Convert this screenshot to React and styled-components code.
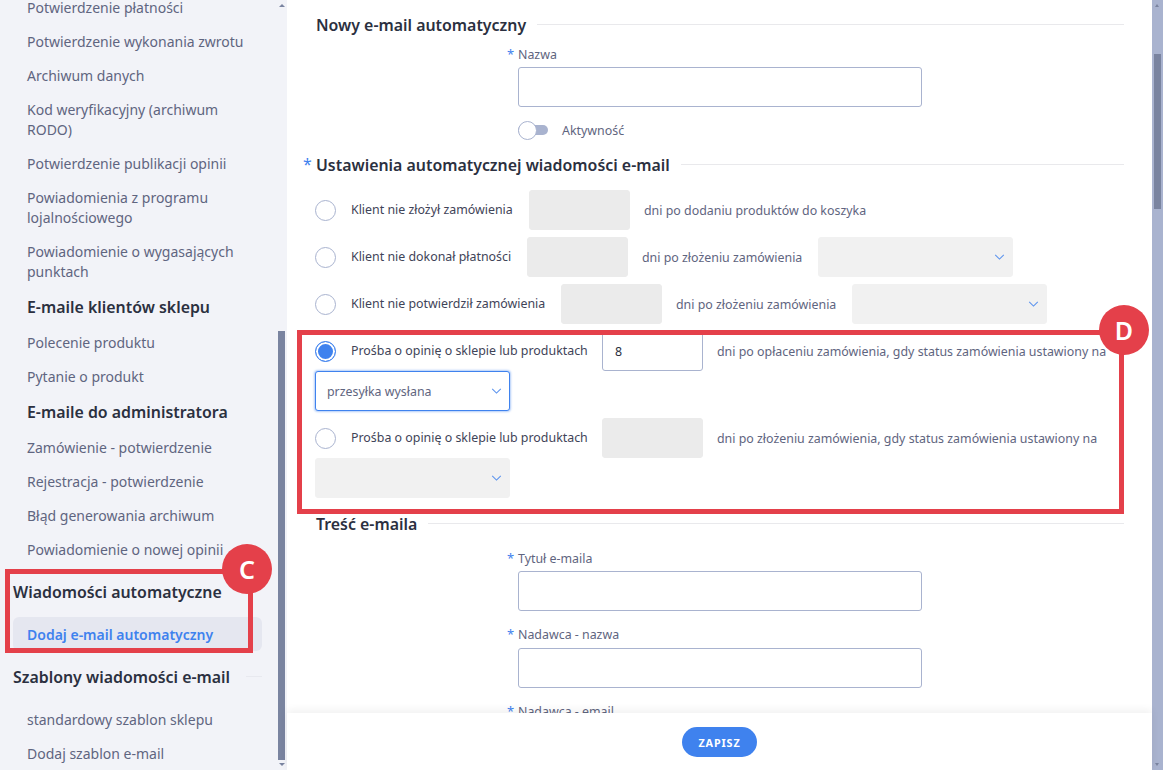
import React from "react"
import styled, { createGlobalStyle } from "styled-components"

const GlobalStyle = createGlobalStyle`
  html, body {
    margin: 0;
    height: 100%;
    overflow: hidden;
    background: #fff;
    font-family: "Noto Sans", "Liberation Sans", sans-serif;
  }
  * {
    box-sizing: border-box;
  }
`

const Page = styled.div`
  position: relative;
  display: flex;
  width: 1163px;
  height: 770px;
  overflow: hidden;
`

const Sidebar = styled.aside`
  position: relative;
  flex: 0 0 287px;
  height: 770px;
  overflow: hidden;
  background: #f2f3f8;
`

const SideList = styled.nav`
  margin-top: -10px;
  display: flex;
  flex-direction: column;
`

const SideItem = styled.div`
  padding: 8px 30px 6px 27px;
  font-size: 14px;
  line-height: 20px;
  color: #5f6580;
`

const SideActive = styled.div`
  margin: 0 25px 0 13px;
  padding: 8px 0 6px 14px;
  height: 34px;
  border-radius: 6px;
  background: #e5e7f0;
  font-size: 14px;
  font-weight: 600;
  line-height: 20px;
  color: #3f82ee;
`

const SideHeading = styled.div`
  display: flex;
  align-items: center;
  gap: 16px;
  height: ${props => props.height}px;
  margin-right: 25px;
  padding-top: 1px;
  padding-left: ${props => props.indent}px;
  font-size: 15.9px;
  font-weight: 600;
  color: #2b3040;

  &::after {
    content: "";
    display: ${props => (props.line ? "block" : "none")};
    flex: 1;
    height: 1px;
    margin-bottom: 2px;
    background: #e8e9ef;
  }
`

const SideThumb = styled.div`
  position: absolute;
  left: 278px;
  top: 331px;
  width: 7px;
  height: 429px;
  background: #7a84a0;
`

const SideArrow = styled.div`
  position: absolute;
  left: 279px;
  ${props => (props.down ? "bottom: 4px;" : "top: 4px;")}
  width: 0;
  height: 0;
  border-left: 3px solid transparent;
  border-right: 3px solid transparent;
  ${props => (props.down ? "border-top" : "border-bottom")}: 3px solid #7a84a0;
`

const Main = styled.main`
  flex: 1;
  display: flex;
  flex-direction: column;
  height: 770px;
  min-width: 0;
`

const Content = styled.div`
  flex: 1;
  min-height: 0;
  overflow: hidden;
  padding: 8px 28px 0 28px;
`

const SectionHead = styled.h2`
  display: flex;
  align-items: center;
  gap: 11px;
  margin: ${props => props.top || 0}px 0 0;
  height: 34px;
  font-size: 15.9px;
  font-weight: 600;
  color: #2b3040;

  &::after {
    content: "";
    flex: 1;
    height: 1px;
    margin-bottom: 2px;
    background: #e9e9ec;
  }
`

const HeadText = styled.span`
  position: relative;
  padding-left: 1px;
`

const HeadStar = styled.span`
  position: absolute;
  left: -12px;
  top: -1px;
  color: #3f82ee;
  font-weight: 400;
`

const Field = styled.div`
  margin: ${props => props.top}px 0 0 192px;
  width: 415px;
`

const FieldLabel = styled.label`
  display: flex;
  height: 20px;
  align-items: center;
  font-size: 12.4px;
  color: #5f6580;
`

const Star = styled.span`
  width: 11px;
  color: #3f82ee;
  font-size: 13px;
`

const TextInput = styled.input`
  display: block;
  margin: ${props => props.gap}px 0 0 11px;
  width: 404px;
  height: 40px;
  border: 1px solid #a9b3cf;
  border-radius: 3px;
  background: #fff;
  outline: none;
`

const ToggleRow = styled.div`
  display: flex;
  align-items: center;
  gap: 14px;
  height: 20px;
  margin: 13px 0 0 203px;
  font-size: 12.4px;
  color: #5f6580;
`

const Toggle = styled.span`
  position: relative;
  display: block;
  width: 30px;
  height: 10px;
  border-radius: 5px;
  background: #a9b3cf;

  &::before {
    content: "";
    position: absolute;
    left: 0;
    top: -4px;
    width: 17px;
    height: 17px;
    border: 1px solid #a9b3cf;
    border-radius: 50%;
    background: #fff;
  }
`

const Options = styled.div`
  margin-top: 8px;
`

const OptionRow = styled.div`
  display: flex;
  flex-wrap: wrap;
  align-items: center;
  margin-bottom: 7px;
`

const Radio = styled.span`
  flex: 0 0 21px;
  height: 21px;
  margin-right: 15px;
  border-radius: 50%;
  border: 1px solid ${props => (props.checked ? "#3f82ee" : "#a9b3cf")};
  background: ${props => (props.checked ? "#3f82ee" : "#fff")};
  box-shadow: ${props => (props.checked ? "inset 0 0 0 2px #fff" : "none")};
`

const OptionLabel = styled.span`
  flex: 0 0 ${props => props.width}px;
  font-size: 12.4px;
  color: #3f4458;
  margin-top: -1px;
`

const DaysInput = styled.input`
  flex: 0 0 101px;
  width: 101px;
  height: 40px;
  padding: 0 12px;
  border: 1px solid ${props => (props.disabled ? "#ebebeb" : "#a9b3cf")};
  border-radius: 3px;
  background: ${props => (props.disabled ? "#ebebeb" : "#fff")};
  font: 12.4px "Noto Sans", sans-serif;
  color: #2b3040;
  outline: none;
`

const DaysText = styled.span`
  flex: 0 0 ${props => props.width}px;
  margin-left: 14px;
  font-size: 12.4px;
  color: #5f6580;
`

const Select = styled.div`
  flex: 0 0 195px;
  display: flex;
  align-items: center;
  height: 40px;
  padding: 0 7px 0 11px;
  border: 1px solid ${props => (props.focused ? "#3f82ee" : "#f1f1f1")};
  border-radius: 3px;
  background: ${props => (props.focused ? "#fff" : "#f1f1f1")};
  box-shadow: ${props => (props.focused ? "0 0 2px 1px rgba(63, 130, 238, 0.4)" : "none")};
  font-size: 12.4px;
  color: #5f6580;

  svg {
    margin-left: auto;
  }
`

const Footer = styled.footer`
  flex: 0 0 57px;
  display: flex;
  justify-content: center;
  align-items: center;
  padding-top: 1px;
  background: #fff;
  box-shadow: 0 -3px 8px rgba(0, 0, 0, 0.06);
  z-index: 1;
`

const SaveButton = styled.button`
  width: 75px;
  height: 30px;
  border: 0;
  border-radius: 15px;
  background: #3f82ee;
  color: #fff;
  font: 700 10.8px "Noto Sans", sans-serif;
  letter-spacing: 0.9px;
`

const PageScroll = styled.div`
  position: relative;
  flex: 0 0 11px;
  height: 770px;
  background: #a9b3cf;
`

const PageThumb = styled.div`
  position: absolute;
  left: 2px;
  top: 54px;
  width: 7px;
  height: 155px;
  background: #7a84a0;
`

const PageArrow = styled.div`
  position: absolute;
  left: 3px;
  ${props => (props.down ? "bottom: 4px;" : "top: 4px;")}
  width: 0;
  height: 0;
  border-left: 2.5px solid transparent;
  border-right: 2.5px solid transparent;
  ${props => (props.down ? "border-top" : "border-bottom")}: 3px solid #7a84a0;
`

const Callout = styled.div`
  position: absolute;
  left: ${props => props.x}px;
  top: ${props => props.y}px;
  width: ${props => props.w}px;
  height: ${props => props.h}px;
  border: 5px solid #e4404a;
  pointer-events: none;
  z-index: 2;
`

const Badge = styled.div`
  position: absolute;
  left: ${props => props.x - 25}px;
  top: ${props => props.y - 25}px;
  display: flex;
  align-items: center;
  justify-content: center;
  width: 50px;
  height: 50px;
  border-radius: 50%;
  background: #e4404a;
  color: #fff;
  font-size: 25px;
  font-weight: 600;
  z-index: 3;
`

function Chevron() {
  return (
    <svg width="11" height="6" viewBox="0 0 12 7" fill="none">
      <path d="M1 1l5 5 5-5" stroke="#5b93ee" strokeWidth="1.2" />
    </svg>
  )
}

function Option({ checked, label, labelWidth, value, days, daysWidth, select, focused, text }) {
  return (
    <OptionRow>
      <Radio checked={checked} />
      <OptionLabel width={labelWidth}>{label}</OptionLabel>
      <DaysInput disabled={!value} defaultValue={value} />
      <DaysText width={daysWidth}>{days}</DaysText>
      {select && (
        <Select focused={focused}>
          {text}
          <Chevron />
        </Select>
      )}
    </OptionRow>
  )
}

function Input({ label, top, gap = 3 }) {
  return (
    <Field top={top}>
      <FieldLabel>
        <Star>*</Star>
        {label}
      </FieldLabel>
      <TextInput gap={gap} />
    </Field>
  )
}

export default function App() {
  return (
    <Page>
      <GlobalStyle />
      <Sidebar>
        <SideList>
          <SideItem>Potwierdzenie płatności</SideItem>
          <SideItem>Potwierdzenie wykonania zwrotu</SideItem>
          <SideItem>Archiwum danych</SideItem>
          <SideItem>Kod weryfikacyjny (archiwum RODO)</SideItem>
          <SideItem>Potwierdzenie publikacji opinii</SideItem>
          <SideItem>Powiadomienia z programu lojalnościowego</SideItem>
          <SideItem>Powiadomienie o wygasających punktach</SideItem>
          <SideHeading height={37} indent={27}>E-maile klientów sklepu</SideHeading>
          <SideItem>Polecenie produktu</SideItem>
          <SideItem>Pytanie o produkt</SideItem>
          <SideHeading height={37} indent={27}>E-maile do administratora</SideHeading>
          <SideItem>Zamówienie - potwierdzenie</SideItem>
          <SideItem>Rejestracja - potwierdzenie</SideItem>
          <SideItem>Błąd generowania archiwum</SideItem>
          <SideItem>Powiadomienie o nowej opinii</SideItem>
          <SideHeading height={51} indent={13}>Wiadomości automatyczne</SideHeading>
          <SideActive>Dodaj e-mail automatyczny</SideActive>
          <SideHeading height={51} indent={13} line>Szablony wiadomości e-mail</SideHeading>
          <SideItem>standardowy szablon sklepu</SideItem>
          <SideItem>Dodaj szablon e-mail</SideItem>
        </SideList>
        <SideArrow />
        <SideThumb />
        <SideArrow down />
      </Sidebar>

      <Main>
        <Content>
          <SectionHead>
            <HeadText>Nowy e-mail automatyczny</HeadText>
          </SectionHead>
          <Input label="Nazwa" top={2} />
          <ToggleRow>
            <Toggle />
            Aktywność
          </ToggleRow>
          <SectionHead top={8}>
            <HeadText>
              <HeadStar>*</HeadStar>
              Ustawienia automatycznej wiadomości e-mail
            </HeadText>
          </SectionHead>
          <Options>
            <Option
              label="Klient nie złożył zamówienia"
              labelWidth={178}
              days="dni po dodaniu produktów do koszyka"
              daysWidth={300}
            />
            <Option
              label="Klient nie dokonał płatności"
              labelWidth={176}
              days="dni po złożeniu zamówienia"
              daysWidth={176}
              select
            />
            <Option
              label="Klient nie potwierdził zamówienia"
              labelWidth={210}
              days="dni po złożeniu zamówienia"
              daysWidth={176}
              select
            />
            <Option
              checked
              label="Prośba o opinię o sklepie lub produktach"
              labelWidth={251}
              value="8"
              days="dni po opłaceniu zamówienia, gdy status zamówienia ustawiony na"
              daysWidth={392}
              select
              focused
              text="przesyłka wysłana"
            />
            <Option
              label="Prośba o opinię o sklepie lub produktach"
              labelWidth={251}
              days="dni po złożeniu zamówienia, gdy status zamówienia ustawiony na"
              daysWidth={392}
              select
            />
          </Options>
          <SectionHead top={9}>
            <HeadText>Treść e-maila</HeadText>
          </SectionHead>
          <Input label="Tytuł e-maila" top={7} />
          <Input label="Nadawca - nazwa" top={13} gap={4} />
          <Input label="Nadawca - email" top={13} />
        </Content>
        <Footer>
          <SaveButton>ZAPISZ</SaveButton>
        </Footer>
      </Main>

      <PageScroll>
        <PageArrow />
        <PageThumb />
        <PageArrow down />
      </PageScroll>

      <Callout x={5} y={569} w={248} h={84} />
      <Badge x={247} y={569}>C</Badge>
      <Callout x={297} y={330} w={827} h={184} />
      <Badge x={1124} y={330}>D</Badge>
    </Page>
  )
}
